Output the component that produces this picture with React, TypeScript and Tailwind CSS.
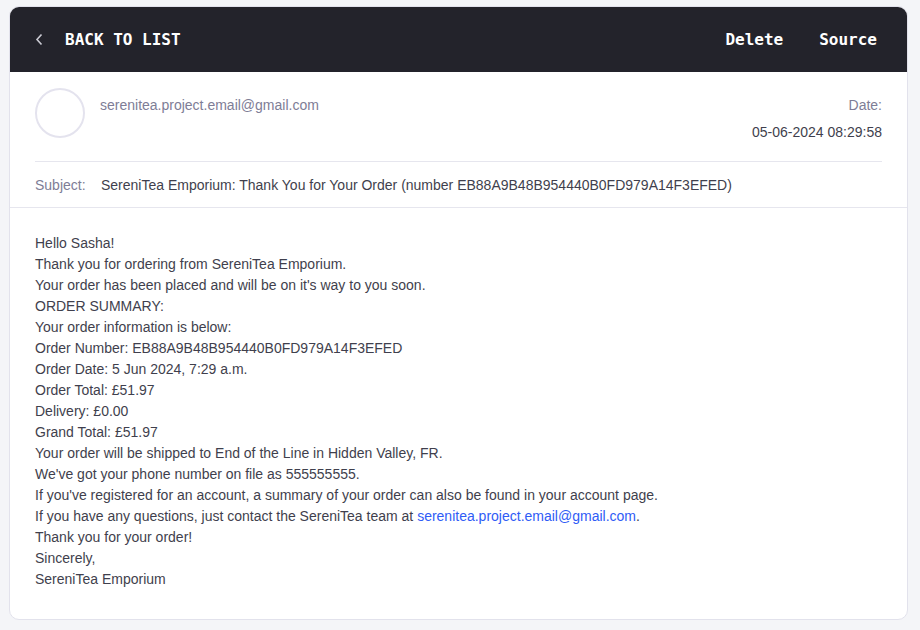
import React from 'react';

const lines: React.ReactNode[] = [
  'Hello Sasha!',
  'Thank you for ordering from SereniTea Emporium.',
  "Your order has been placed and will be on it's way to you soon.",
  'ORDER SUMMARY:',
  'Your order information is below:',
  'Order Number: EB88A9B48B954440B0FD979A14F3EFED',
  'Order Date: 5 Jun 2024, 7:29 a.m.',
  'Order Total: £51.97',
  'Delivery: £0.00',
  'Grand Total: £51.97',
  'Your order will be shipped to End of the Line in Hidden Valley, FR.',
  "We've got your phone number on file as 555555555.",
  "If you've registered for an account, a summary of your order can also be found in your account page.",
  <>
    If you have any questions, just contact the SereniTea team at{' '}
    <a href="#" className="text-[#2f5cf6]">serenitea.project.email@gmail.com</a>.
  </>,
  'Thank you for your order!',
  'Sincerely,',
  'SereniTea Emporium',
];

export default function App() {
  return (
    <div className="min-h-[630px] bg-[#f4f5f8] pt-[6px] pl-[9px] pb-3 font-['Liberation_Sans',Arial,sans-serif]">
      <div className="w-[899px] rounded-[10px] border border-[#e2e2ec] bg-white overflow-hidden">
        {/* top bar */}
        <div className="h-[65px] bg-[#23232b] flex items-center justify-between pl-[25px] pr-[30px] font-['DejaVu_Sans_Mono',monospace] font-bold text-white text-[16px]">
          <button className="flex items-center">
            <svg width="8" height="13" viewBox="0 0 8 13" className="mr-[22px]">
              <path d="M6.5 1.5 L2 6.5 L6.5 11.5" fill="none" stroke="#c9c9d2" strokeWidth="1.6" />
            </svg>
            BACK TO LIST
          </button>
          <div className="flex items-center gap-[36px]">
            <button>Delete</button>
            <button>Source</button>
          </div>
        </div>

        {/* meta */}
        <div className="px-[25px]">
          <div className="flex justify-between pt-[16px] pb-[19px] border-b border-[#e6e6ee]">
            <div className="flex">
              <div className="w-[50px] h-[50px] rounded-full border-2 border-[#e4e3ee]" />
              <div className="ml-[15px] mt-[7px] text-[14px] leading-[20px] text-[#7e7d96]">serenitea.project.email@gmail.com</div>
            </div>
            <div className="text-right text-[14px] leading-[20px] mt-[7px]">
              <div className="text-[#7e7d96]">Date:</div>
              <div className="mt-[7px] text-[#3f3f4d]">05-06-2024 08:29:58</div>
            </div>
          </div>
          <div className="flex pt-[13px] pb-[12px] text-[14px] leading-[20px]">
            <span className="text-[#7e7d96] w-[66px]">Subject:</span>
            <span className="text-[#3f3f4d]">SereniTea Emporium: Thank You for Your Order (number EB88A9B48B954440B0FD979A14F3EFED)</span>
          </div>
        </div>

        {/* body */}
        <div className="border-t border-[#e6e6ee] px-[25px] pt-[25px] pb-[29px] text-[14px] leading-[21px] text-[#3f3f4d]">
          {lines.map((l, i) => (
            <div key={i}>{l}</div>
          ))}
        </div>
      </div>
    </div>
  );
}
